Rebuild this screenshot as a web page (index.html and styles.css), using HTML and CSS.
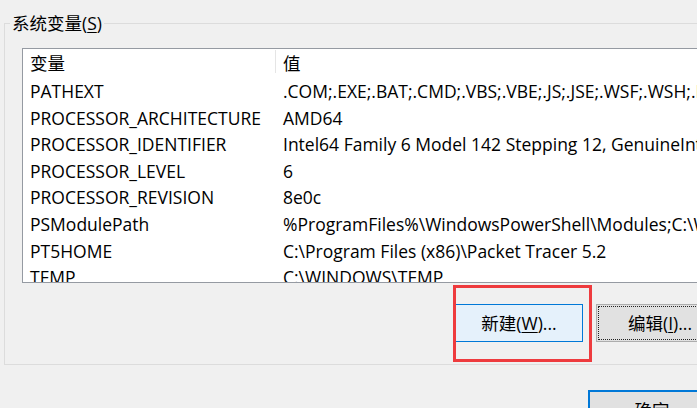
FILE: index.html
```html
<!DOCTYPE html>
<html lang="zh-CN">
<head>
<meta charset="utf-8">
<title>系统变量</title>
<link rel="stylesheet" href="styles.css">
</head>
<body>
<div class="page">
  <fieldset class="group">
    <legend class="group-title">系统变量(<u>S</u>)</legend>
    <div class="listview">
      <div class="row header">
        <div class="cell name">变量</div>
        <div class="sep"></div>
        <div class="cell value">值</div>
      </div>
      <div class="row"><div class="cell name">PATHEXT</div><div class="cell value">.COM;.EXE;.BAT;.CMD;.VBS;.VBE;.JS;.JSE;.WSF;.WSH;.MSC</div></div>
      <div class="row"><div class="cell name">PROCESSOR_ARCHITECTURE</div><div class="cell value">AMD64</div></div>
      <div class="row"><div class="cell name">PROCESSOR_IDENTIFIER</div><div class="cell value">Intel64 Family 6 Model 142 Stepping 12, GenuineIntel</div></div>
      <div class="row"><div class="cell name">PROCESSOR_LEVEL</div><div class="cell value">6</div></div>
      <div class="row"><div class="cell name">PROCESSOR_REVISION</div><div class="cell value">8e0c</div></div>
      <div class="row"><div class="cell name">PSModulePath</div><div class="cell value">%ProgramFiles%\WindowsPowerShell\Modules;C:\WINDOWS\system32\WindowsPowerShell\v1.0\Modules</div></div>
      <div class="row"><div class="cell name">PT5HOME</div><div class="cell value">C:\Program Files (x86)\Packet Tracer 5.2</div></div>
      <div class="row"><div class="cell name">TEMP</div><div class="cell value">C:\WINDOWS\TEMP</div></div>
    </div>
    <div class="buttons">
      <button class="btn btn-hover">新建(<u>W</u>)...</button>
      <button class="btn btn-focus">编辑(<u>I</u>)...</button>
    </div>
  </fieldset>
  <div class="footer">
    <button class="btn btn-default">确定</button>
  </div>
  <div class="highlight"></div>
</div>
</body>
</html>
```
FILE: styles.css
```css
html, body {
  margin: 0;
  padding: 0;
  width: 697px;
  height: 408px;
  overflow: hidden;
  background: #f0f0f0;
}

.page {
  position: relative;
  width: 697px;
  height: 408px;
  overflow: hidden;
  font-family: "Open Sans", "Noto Sans CJK SC", sans-serif;
  font-size: 17.5px;
  color: #000;
}

.group {
  box-sizing: border-box;
  width: 780px;
  margin: 13px 0 0 4px;
  padding: 0 0 22px 0;
  border: 1px solid #dcdcdc;
}

.group-title {
  margin-left: 5px;
  padding: 0 2px;
  line-height: 20px;
  height: 20px;
}

.group-title u,
.btn u {
  text-decoration-thickness: 1px;
  text-underline-offset: 2px;
}

.listview {
  box-sizing: border-box;
  margin: 15px 0 0 17px;
  width: 740px;
  height: 235px;
  border: 1px solid #959aa2;
  background: #fff;
  overflow: hidden;
}

.row {
  display: flex;
  height: 26.6px;
  line-height: 26.6px;
  white-space: nowrap;
}

.row.header {
  height: 29px;
  line-height: 29px;
}

.cell {
  overflow: hidden;
}

.cell.name {
  box-sizing: border-box;
  flex: 0 0 252px;
  padding-left: 7px;
}

.row.header .cell.name {
  flex-basis: 252px;
}

.sep {
  flex: 0 0 1px;
  align-self: flex-start;
  height: 23px;
  margin-top: 1px;
  background: #e5e5e5;
}

.row:not(.header) .cell.name {
  flex-basis: 253px;
}

.cell.value {
  flex: 1 1 auto;
  padding-left: 7px;
}

.buttons {
  display: flex;
  gap: 13px;
  margin: 21px 0 0 450px;
}

.btn {
  box-sizing: border-box;
  width: 128px;
  height: 38px;
  padding: 0;
  font-family: "Open Sans", "Noto Sans CJK SC", sans-serif;
  font-size: 17.5px;
  color: #000;
  background: #e1e1e1;
  border: 1px solid #adadad;
  border-radius: 0;
  line-height: 36px;
}

.btn-hover {
  background: #e5f1fb;
  border-color: #0078d7;
}

.btn-focus {
  outline: 1px dotted #222;
  outline-offset: -3px;
}

.btn-default {
  border: 2px solid #0078d7;
}

.footer {
  margin: 25px 0 0 588px;
}

.highlight {
  position: absolute;
  left: 453px;
  top: 285px;
  width: 139px;
  height: 77px;
  box-sizing: border-box;
  border: 3px solid #ee3b3e;
}
```
